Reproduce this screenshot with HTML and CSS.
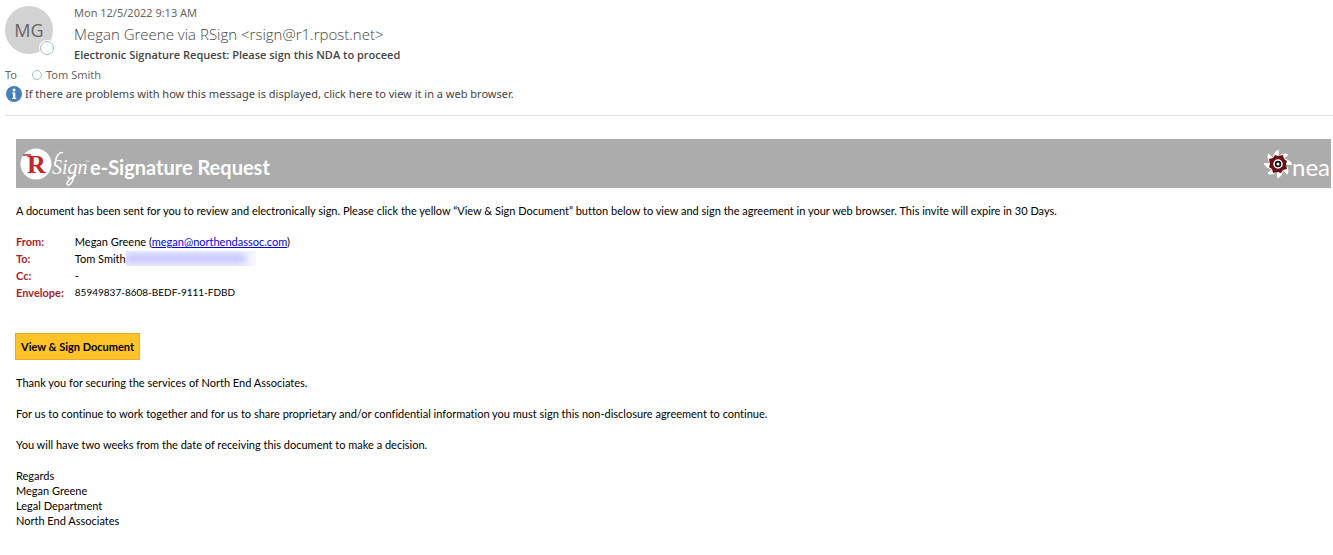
FILE: index.html
```
<!DOCTYPE html>
<html lang="en">
<head>
    <meta charset="UTF-8">
    <meta name="viewport" content="width=device-width, initial-scale=1.0">
    <title>Electronic Signature Request</title>
    <link rel="stylesheet" href="styles.css">
</head>
<body>
    <header class="mail-header">
        <div class="sender">
            <div class="avatar">MG<i class="presence"></i></div>
            <div class="sender-info">
                <div class="date">Mon 12/5/2022 9:13 AM</div>
                <div class="from-name">Megan Greene via RSign &lt;rsign@r1.rpost.net&gt;</div>
                <h1 class="subject">Electronic Signature Request: Please sign this NDA to proceed</h1>
            </div>
        </div>
        <div class="recipient">
            <span class="to-label">To</span>
            <i class="dot"></i>
            <span>Tom Smith</span>
        </div>
        <button class="info-bar" type="button">
            <svg width="16" height="16" viewBox="0 0 16 16">
                <circle cx="8" cy="8" r="8" fill="#4680b8"/>
                <circle cx="8" cy="4" r="1.5" fill="#fff"/>
                <path d="M6 6.5h3.3v5.500h1v1H6v-1h1V7.500H6z" fill="#fff"/>
            </svg>
            <span>If there are problems with how this message is displayed, click here to view it in a web browser.</span>
        </button>
    </header>

    <main class="mail-body">
        <div class="banner">
            <svg class="rsign" width="74" height="48" viewBox="0 0 74 48">
                <circle cx="20" cy="24" r="15.500" fill="#fff"/>
                <path d="M7 15h8" stroke="#c4242c" stroke-width="1.500"/>
                <text class="logo-r" x="11" y="33">R</text>
                <text class="logo-sign" x="36" y="34">Sign</text>
                <path d="M47 13c-3-2-8 4-7 8M58 34c0 6-3 11-6 11-3-1 1-6 8-10" fill="none" stroke="#fff" stroke-width="1.500"/>
                <text class="logo-tm" x="69" y="23">™</text>
            </svg>
            <h2 class="banner-title">e-Signature Request</h2>
            <div class="nea">
                <svg width="28" height="28" viewBox="-14 -14 28 28">
                    <defs>
                        <path id="blade" d="M-5-6C-5-9-3-13 0-14c2 0 0 3 1 8z"/>
                    </defs>
                    <g fill="#fff">
                        <use href="#blade"/>
                        <use href="#blade" transform="rotate(45)"/>
                        <use href="#blade" transform="rotate(90)"/>
                        <use href="#blade" transform="rotate(135)"/>
                        <use href="#blade" transform="rotate(180)"/>
                        <use href="#blade" transform="rotate(225)"/>
                        <use href="#blade" transform="rotate(270)"/>
                        <use href="#blade" transform="rotate(315)"/>
                    </g>
                    <path d="M-3-9 0-8 5-9 6-5 9-3 8 0 9 5 5 6 3 9 0 8-5 9-6 5-9 3-8 0-9-5-5-6z" fill="#681015"/>
                    <circle r="4" fill="#111" stroke="#fff" stroke-width="1.500"/>
                    <circle r="1.500" fill="#fff"/>
                </svg>
                <span>nea</span>
            </div>
        </div>

        <p>A document has been sent for you to review and electronically sign. Please click the yellow “View &amp; Sign Document” button below to view and sign the agreement in your web browser. This invite will expire in 30 Days.</p>

        <table class="details">
            <tr>
                <th scope="row">From:</th>
                <td>Megan Greene (<a href="mailto:megan@northendassoc.com">megan@northendassoc.com</a>)</td>
            </tr>
            <tr>
                <th scope="row">To:</th>
                <td><div class="to-cell">Tom Smith<span class="hidden-mail"><i></i></span></div></td>
            </tr>
            <tr>
                <th scope="row">Cc:</th>
                <td>-</td>
            </tr>
            <tr>
                <th scope="row">Envelope:</th>
                <td class="envelope-id">85949837-8608-BEDF-9111-FDBD</td>
            </tr>
        </table>

        <button class="sign-btn" type="button">View &amp; Sign Document</button>

        <p>Thank you for securing the services of North End Associates.</p>
        <p>For us to continue to work together and for us to share proprietary and/or confidential information you must sign this non-disclosure agreement to continue.</p>
        <p>You will have two weeks from the date of receiving this document to make a decision.</p>
        <p>Regards<br>Megan Greene<br>Legal Department<br>North End Associates</p>
    </main>
</body>
</html>
```
FILE: styles.css
```
*{
    margin: 0;
    padding: 0;
    box-sizing: border-box;
}
body{
    background-color: #fff;
    color: #000;
    font: 11px/15px Lato, "Liberation Sans", sans-serif;
    font-variant-ligatures: none;
}
/* message header */
.mail-header{
    margin-left: 5px;
    padding: 5px 0 13px;
    border-bottom: 1px solid #e1e1e1;
    font-family: "Noto Sans", "Open Sans", sans-serif;
    font-size: 11px;
    color: #666;
}
.sender{
    display: flex;
    gap: 21px;
}
.avatar{
    width: 48px;
    height: 48px;
    margin-top: 1px;
    border-radius: 50%;
    background-color: #d2d2d2;
    font-family: "Open Sans", sans-serif;
    font-size: 18px;
    line-height: 48px;
    text-align: center;
    position: relative;
}
.presence{
    width: 14px;
    height: 14px;
    border: 1px solid #a5c0cd;
    border-radius: 50%;
    background-color: #fff;
    box-shadow: 0 0 0 1px #fff;
    position: absolute;
    right: -1px;
    bottom: -1px;
}
.date{
    line-height: 16px;
}
.from-name{
    font-family: "Open Sans", sans-serif;
    font-size: 15px;
    font-weight: 300;
    line-height: 26px;
    color: #444;
}
.subject{
    font-family: "Open Sans", sans-serif;
    font-size: 11px;
    font-weight: 600;
    line-height: 16px;
    color: #444;
}
.recipient{
    display: flex;
    align-items: center;
    margin-top: 4px;
    line-height: 16px;
}
.to-label{
    width: 27px;
}
.dot{
    width: 10px;
    height: 10px;
    margin-right: 4px;
    border: 1px solid #a5c0cd;
    border-radius: 50%;
}
.info-bar{
    display: flex;
    align-items: center;
    gap: 3px;
    margin: 3px 0 0 1px;
    border: none;
    background: none;
    font: inherit;
    line-height: 16px;
    color: #444;
    text-align: left;
    cursor: pointer;
}
/* message content */
.mail-body{
    padding: 23px 2px 16px 16px;
}
.mail-body p{
    margin-top: 16px;
}
.mail-body .banner + p,
.mail-body .sign-btn + p{
    margin-top: 15px;
}
.banner{
    display: flex;
    align-items: center;
    height: 49px;
    background-color: #acacac;
    color: #fff;
}
.logo-r{
    font: bold 26px "Liberation Serif", serif;
    fill: #c4242c;
}
.logo-sign{
    font: italic 20px "Liberation Serif", serif;
    fill: #fff;
}
.logo-tm{
    font: 4px "Liberation Sans", sans-serif;
    fill: #fff;
}
.banner-title{
    padding-top: 6px;
    font-size: 20px;
    line-height: 24px;
}
.nea{
    display: flex;
    align-items: center;
    margin-left: auto;
    padding-right: 1px;
    font: 24px/24px Lato, sans-serif;
}
.nea span{
    padding-top: 6px;
}
.details{
    margin-top: 15px;
    border-collapse: collapse;
}
.details th{
    padding-right: 11px;
    color: #a91e2c;
    text-align: left;
    line-height: 17px;
}
.details td{
    line-height: 17px;
}
.details .envelope-id{
    font-size: 10px;
}
.details a{
    color: #0000ee;
}
.to-cell{
    display: flex;
    align-items: center;
}
.hidden-mail{
    display: flex;
    align-items: center;
    width: 130px;
    height: 15px;
    background: linear-gradient(to right, #e8e8ff 85%, #f7f7fd);
    overflow: hidden;
}
.hidden-mail i{
    width: 120px;
    height: 7px;
    background-color: #c4c4ff;
    filter: blur(3px);
}
.sign-btn{
    display: block;
    margin: 32px 0 0 -1px;
    padding: 5px;
    border: 1px solid #e3ad2f;
    background-color: #ffc327;
    font: bold 11px/15px Lato, sans-serif;
    color: #000;
    cursor: pointer;
}
```
